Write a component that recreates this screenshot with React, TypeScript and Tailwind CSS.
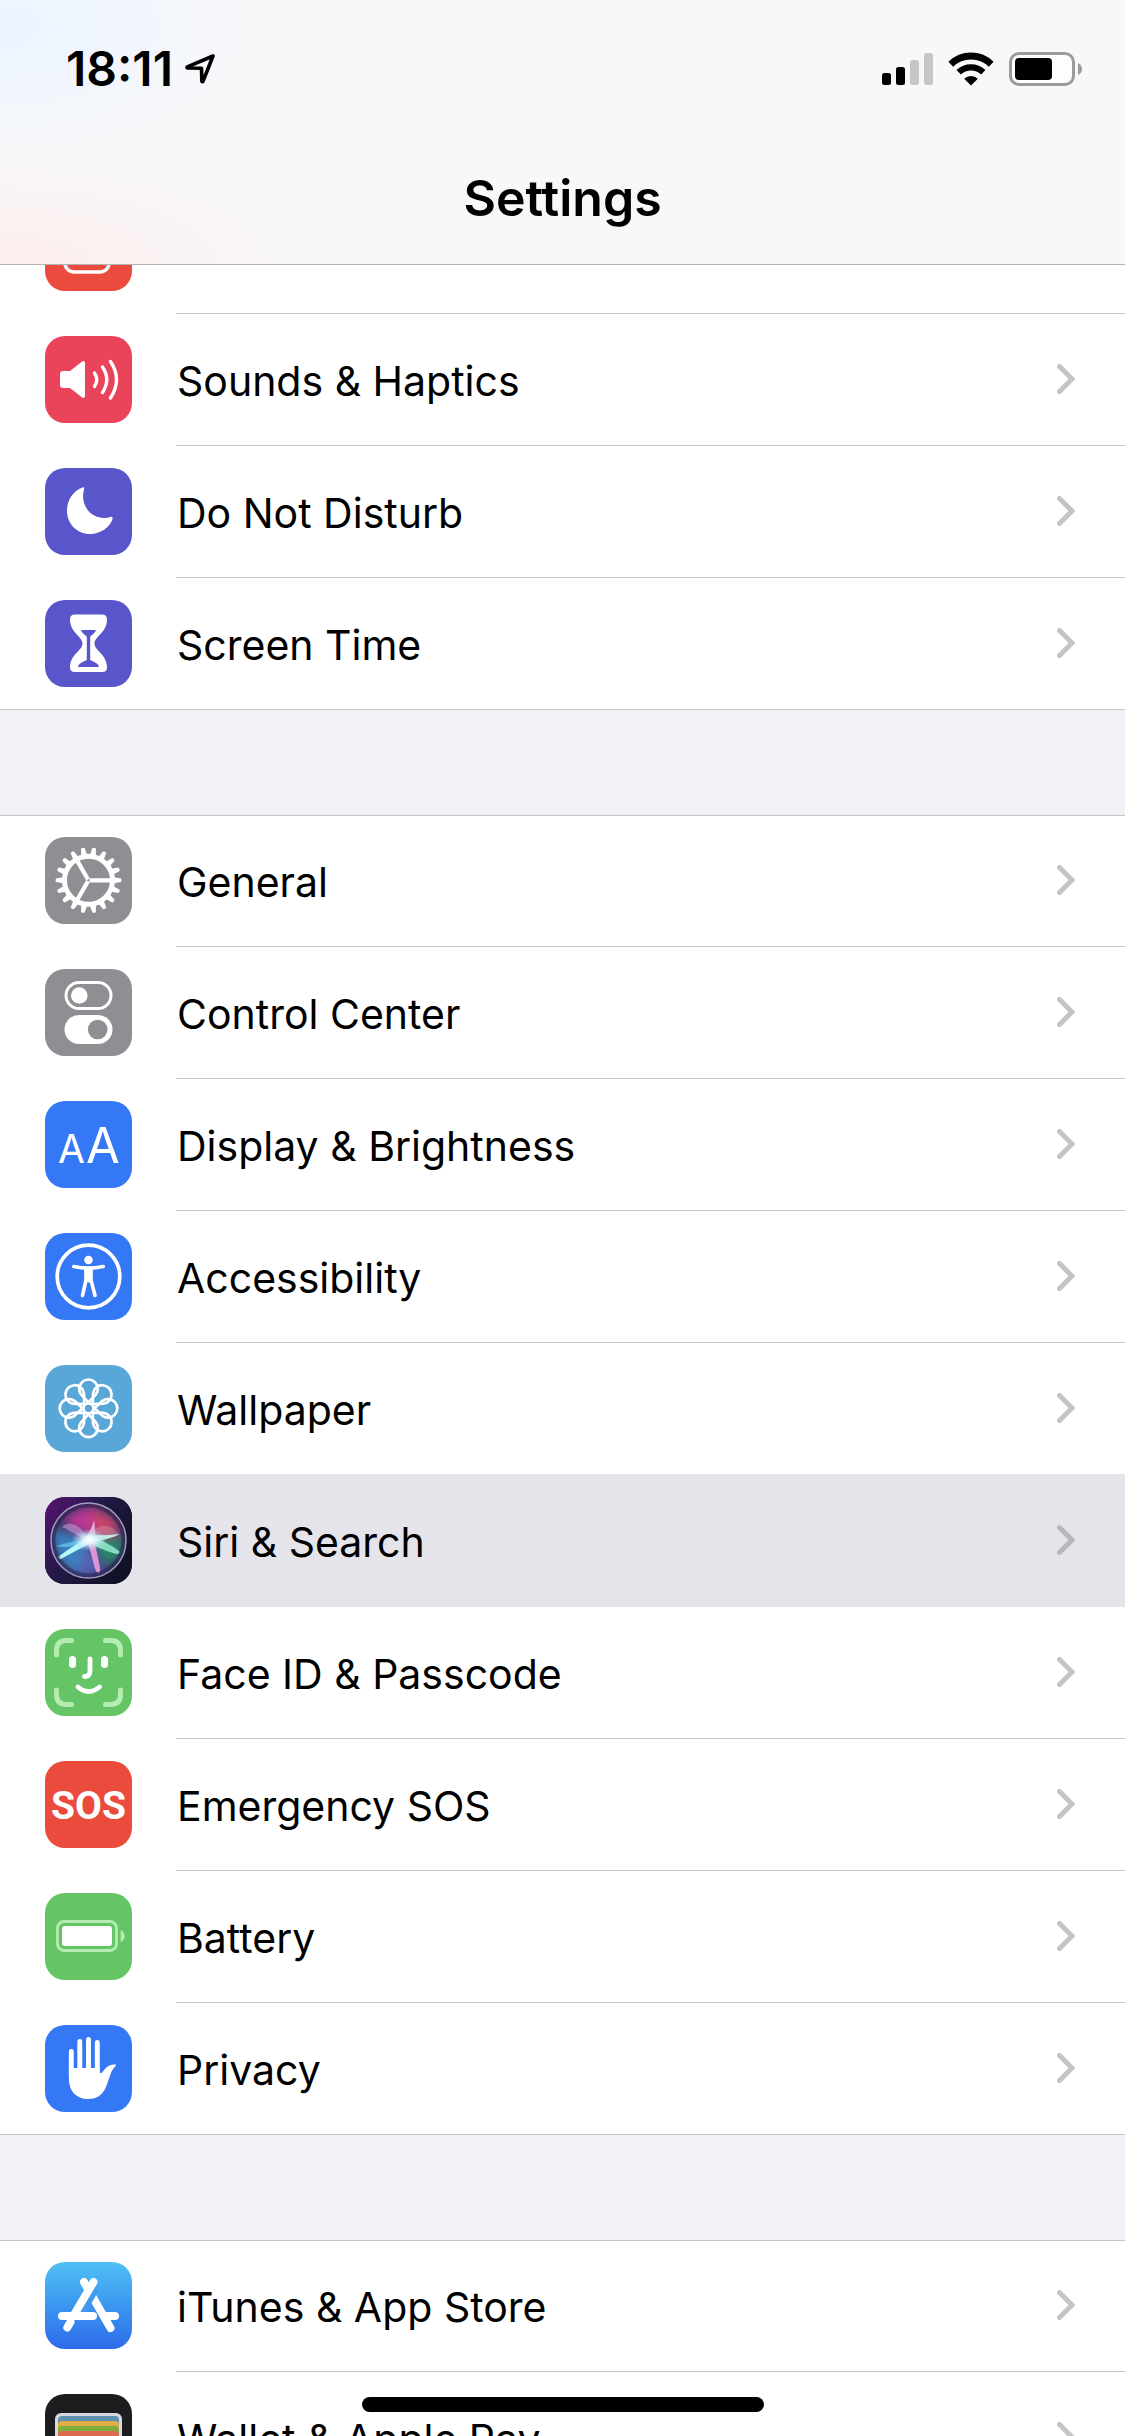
import React from 'react';

interface SettingsItem {
  label: string;
  icon: React.ReactNode;
  selected?: boolean;
}

interface TileProps {
  color: string;
  children: React.ReactNode;
}

const Tile = ({ color, children }: TileProps) => (
  <svg viewBox="0 0 87 87" className={`size-[87px] shrink-0 rounded-[20px] ${color}`} fill="none" aria-hidden="true">
    {children}
  </svg>
);

const NotificationsIcon = () => (
  <Tile color="bg-[#ea4b3d]">
    <rect x="20" y="22" width="44" height="46" rx="9" stroke="#fff" strokeWidth="3.5" />
    <circle cx="62" cy="24" r="10" fill="#fff" />
  </Tile>
);

const SoundsIcon = () => (
  <Tile color="bg-[#e9445a]">
    <path d="M15 38q0-3 3-3h7L36.500 26q3.500-2.500 3.500 1.500v32q0 4-3.500 1.500L25 52h-7q-3 0-3-3z" fill="#fff" />
    <g stroke="#fff" strokeWidth="3.4" strokeLinecap="round">
      <path d="M49.500 37q4.500 6.500 0 13.500" />
      <path d="M57.500 31q8.500 12.500 0 25.500" />
      <path d="M65.500 25.500q12 18 0 36.500" />
    </g>
  </Tile>
);

const MoonIcon = () => (
  <Tile color="bg-[#5856ca]">
    <path
      d="M37.500 19.500C28 23 22 32 22 42.500 22 56 32 66 45 66c11 0 20-7 22.500-15 .5-1.500-.5-2.500-2-2C50 54 34 40 39 21.500c.5-2-.2-2.500-1.500-2z"
      fill="#fff"
    />
  </Tile>
);

const HourglassIcon = () => (
  <Tile color="bg-[#5856ca]">
    <path
      d="M30 14.500h27q5 0 5 5c0 13-12.500 17-12.500 24s12.500 11 12.500 24q0 4.500-5 4.500H30q-5 0-5-4.500c0-13 12.500-17 12.500-24S25 32.500 25 19.500q0-5 5-5z"
      fill="#fff"
    />
    <path
      d="M36.500 30h14c1 0-.5 3-5.300 6.500v23.500c4.300 2 8.300 3.500 8.800 7H33c.5-3.500 4.500-5 8.800-7V36.500c-4.800-3.500-6.300-6.500-5.300-6.500z"
      fill="#5856ca"
    />
  </Tile>
);

const teeth = Array.from({ length: 18 }, (_, i) => i * 20);

const GearIcon = () => (
  <Tile color="bg-[#8e8e93]">
    <g transform="translate(43.500 43.300)">
      {teeth.map((angle) => (
        <path key={angle} d="M24-3.200 32.500-1.800q1 1.800 0 3.600L24 3.200z" fill="#fff" transform={`rotate(${angle})`} />
      ))}
      <circle r="24" stroke="#fff" strokeWidth="5" />
      {[0, 120, 240].map((angle) => (
        <path key={angle} d="M1 0H23" stroke="#fff" strokeWidth="4.200" transform={`rotate(${angle})`} />
      ))}
    </g>
  </Tile>
);

const ControlCenterIcon = () => (
  <Tile color="bg-[#8e8e93]">
    <rect x="21" y="13.500" width="45" height="26" rx="13" stroke="#fff" strokeWidth="3" />
    <circle cx="34.300" cy="26.500" r="8.300" fill="#fff" />
    <rect x="19.500" y="46" width="48" height="29" rx="14.500" fill="#fff" />
    <circle cx="52.700" cy="60.500" r="9.800" fill="#8e8e93" />
  </Tile>
);

const DisplayIcon = () => (
  <Tile color="bg-[#3478f5]">
    <text x="13" y="62" fontSize="39" fill="#fff" className="font-['Inter',sans-serif]">
      A
    </text>
    <text x="41" y="62" fontSize="49" fill="#fff" className="font-['Inter',sans-serif]">
      A
    </text>
  </Tile>
);

const AccessibilityIcon = () => (
  <Tile color="bg-[#3478f5]">
    <circle cx="43.500" cy="43.500" r="31.300" stroke="#fff" strokeWidth="3.700" />
    <circle cx="43.500" cy="27" r="4.300" fill="#fff" />
    <path d="M28.800 33.500q14.700 3.200 29.400 0M41 47l-3.500 15.500M46 47l4 15.500" stroke="#fff" strokeWidth="3.600" strokeLinecap="round" />
    <path d="M39 34.500h9l-.3 14-4.200 1-4.200-1z" fill="#fff" />
  </Tile>
);

const WallpaperIcon = () => (
  <Tile color="bg-[#58a7d8]">
    <g transform="translate(43.500 43.300)" stroke="#fff" strokeWidth="2.700">
      {[0, 45, 90, 135, 180, 225, 270, 315].map((angle) => (
        <path key={angle} d="M0-6-7.500-14A9.300 9.300 0 1 1 7.500-14z" transform={`rotate(${angle})`} />
      ))}
      <circle r="5" />
    </g>
  </Tile>
);

const SiriIcon = () => (
  <Tile color="bg-[#15152b]">
    <defs>
      <linearGradient id="siriBack" x1="0" y1="0" x2="1" y2=".6">
        <stop offset="0" stopColor="#5a1272" />
        <stop offset=".5" stopColor="#221a45" />
        <stop offset="1" stopColor="#101326" />
      </linearGradient>
      <radialGradient id="siriGlow">
        <stop offset="0" stopColor="#fff" />
        <stop offset=".35" stopColor="#e4faff" stopOpacity=".9" />
        <stop offset="1" stopColor="#9fd8ff" stopOpacity="0" />
      </radialGradient>
      <clipPath id="siriBall">
        <circle cx="43.500" cy="43.500" r="37" />
      </clipPath>
      <filter id="siriSoft" x="-50%" y="-50%" width="200%" height="200%">
        <feGaussianBlur stdDeviation="5" />
      </filter>
      <filter id="siriEdge" x="-20%" y="-20%" width="140%" height="140%">
        <feGaussianBlur stdDeviation=".6" />
      </filter>
    </defs>
    <rect width="87" height="87" fill="url(#siriBack)" />
    <g clipPath="url(#siriBall)">
      <circle cx="43.500" cy="43.500" r="37" fill="#3d356b" />
      <g filter="url(#siriSoft)">
        <path d="M18 24q18-18 36-12l-8 30z" fill="#b8388f" />
        <path d="M48 12q24 6 27 24l-26 4z" fill="#c8446a" />
        <path d="M46 44l32-4q0 22-16 28z" fill="#2a8a6c" />
        <path d="M8 32l34 10-8 36Q8 68 8 32z" fill="#3a80c0" />
        <path d="M42 46l18 26q-12 10-28 6z" fill="#5560b4" />
      </g>
      <g filter="url(#siriEdge)">
        <path d="M43 42C34 24 21 25 17 30c7 2 14 10 26 12z" fill="#d0a8e8" opacity=".5" />
        <path d="M43 42c4-14 20-18 30-6 3 5-12 4-30 6z" fill="#e0a5b8" opacity=".35" />
        <path d="M43 42Q28 44 11 49q18 4 32-7z" fill="#6fd8ee" opacity=".6" />
        <path d="M46 39Q30 47 13 60l2 2.500q18-10 34-18z" fill="#b4f8f8" />
        <path d="M37 45q9-10 12-22 2 12 1 24z" fill="#f3b6e2" opacity=".85" />
        <path d="M43 37q19 8 31 17 2 3-3 3-17-5-30-13z" fill="#8ce6c4" opacity=".9" />
        <path d="M43 38q17 1 32-1-12 6-32 9z" fill="#cdf7ee" opacity=".9" />
        <path d="M42 42l7 26q2 8 4.500 8 2.500-1 1-8L49 42z" fill="#ee9ad8" opacity=".9" />
      </g>
      <ellipse cx="44" cy="43" rx="18" ry="11" fill="url(#siriGlow)" />
    </g>
    <circle cx="43.500" cy="43.500" r="35" stroke="#1c1635" strokeWidth="4" opacity=".4" />
    <circle cx="43.500" cy="43.500" r="37.500" stroke="#a79bc4" strokeWidth="1.500" />
  </Tile>
);

const FaceIdIcon = () => (
  <Tile color="bg-[#65c466]">
    <path
      d="M11.500 26v-4.500q0-10 10-10H26.500M60.500 11.500h5q10 0 10 10V26M75.500 61v4.500q0 10-10 10h-5M26.500 75.500h-5q-10 0-10-10V61"
      stroke="#b5ecaf"
      strokeWidth="5"
      strokeLinecap="round"
    />
    <path d="M27.500 30.500v5M59.500 30.500v5" stroke="#fff" strokeWidth="7" strokeLinecap="round" />
    <path d="M45 30v12q0 5.500-5.500 5.500M33 58q10.500 9 21.500 0" stroke="#fff" strokeWidth="4.800" strokeLinecap="round" />
  </Tile>
);

const SosIcon = () => (
  <Tile color="bg-[#ea4b3d]">
    <text
      x="43.500"
      y="58"
      textAnchor="middle"
      fontSize="39"
      fontWeight="700"
      fill="#fff"
      className="font-['Roboto',sans-serif]"
    >
      SOS
    </text>
  </Tile>
);

const BatteryIcon = () => (
  <Tile color="bg-[#65c466]">
    <rect x="12.500" y="28.500" width="59" height="29" rx="6.500" stroke="#b5ecaf" strokeWidth="2.800" />
    <rect x="17" y="33" width="50" height="20" rx="3" fill="#fff" />
    <path d="M75.700 37q4 2 4 6t-4 6z" fill="#b5ecaf" />
  </Tile>
);

const HandIcon = () => (
  <Tile color="bg-[#3478f5]">
    <path d="M26.300 26.500V50M34.800 16.500V50M43.500 14.500V50M52.300 17.500V50" stroke="#fff" strokeWidth="4.900" strokeLinecap="round" />
    <path
      d="M23.900 43h30.800v4.500c1 1 2 .5 3-.8l3-3.700c3-3 7-4 10-3.500 1 .5 0 1.500-1.500 3C65 47 64 56 60 64c-3.500 7-9.500 10-17 10-12 0-19.100-8-19.100-20z"
      fill="#fff"
    />
  </Tile>
);

const AppStoreIcon = () => (
  <Tile color="bg-linear-to-b from-[#51c0f4] to-[#2f6ae9]">
    <g strokeLinecap="round" stroke="#fff" strokeWidth="8">
      <path d="M39 20 65.500 66" />
      <path d="M61 54h9" />
      <path d="M25.500 60l-3.200 5.500" />
    </g>
    <path d="M49 26 31 57" stroke="#4598f0" strokeWidth="11" />
    <path d="M48.500 20 29.500 52M17 54h31" stroke="#fff" strokeWidth="8" strokeLinecap="round" />
  </Tile>
);

const WalletIcon = () => (
  <Tile color="bg-[#1d1d1f]">
    <rect x="10" y="19" width="67" height="52" rx="6" fill="#d8d9e0" />
    <rect x="13" y="22" width="61" height="20" rx="4" fill="#5c8fb0" />
    <rect x="13" y="27" width="61" height="20" rx="4" fill="#dcae45" />
    <rect x="13" y="32" width="61" height="20" rx="4" fill="#7fab3c" />
    <rect x="13" y="37" width="61" height="30" rx="4" fill="#dd6a50" />
  </Tile>
);

const groups: SettingsItem[][] = [
  [
    { label: 'Notifications', icon: <NotificationsIcon /> },
    { label: 'Sounds & Haptics', icon: <SoundsIcon /> },
    { label: 'Do Not Disturb', icon: <MoonIcon /> },
    { label: 'Screen Time', icon: <HourglassIcon /> },
  ],
  [
    { label: 'General', icon: <GearIcon /> },
    { label: 'Control Center', icon: <ControlCenterIcon /> },
    { label: 'Display & Brightness', icon: <DisplayIcon /> },
    { label: 'Accessibility', icon: <AccessibilityIcon /> },
    { label: 'Wallpaper', icon: <WallpaperIcon /> },
    { label: 'Siri & Search', icon: <SiriIcon />, selected: true },
    { label: 'Face ID & Passcode', icon: <FaceIdIcon /> },
    { label: 'Emergency SOS', icon: <SosIcon /> },
    { label: 'Battery', icon: <BatteryIcon /> },
    { label: 'Privacy', icon: <HandIcon /> },
  ],
  [
    { label: 'iTunes & App Store', icon: <AppStoreIcon /> },
    { label: 'Wallet & Apple Pay', icon: <WalletIcon /> },
  ],
];

const Chevron = ({ color }: { color: string }) => (
  <svg viewBox="0 0 18 30" className="h-[30px] w-[18px] shrink-0" fill="none" aria-hidden="true">
    <path d="M2.500 2.500 15 15 2.500 27.500" stroke={color} strokeWidth="5" strokeLinecap="round" />
  </svg>
);

const SettingsRow = ({ item, divider }: { item: SettingsItem; divider: string }) => (
  <a
    href="#"
    className={`flex h-[132px] pl-[45px] ${item.selected ? 'relative bg-[#e5e4ea] shadow-[0_-1px_0_#e5e4ea]' : ''}`}
  >
    <span className="flex items-center pb-px">{item.icon}</span>
    <span className={`ml-11 flex flex-1 items-center justify-between border-b pr-[50px] pb-px pl-px ${divider}`}>
      <span className="pt-1 text-[41px] leading-[48px]">{item.label}</span>
      <Chevron color={item.selected ? '#b8b8bc' : '#c4c4c6'} />
    </span>
  </a>
);

const SettingsGroup = ({ items }: { items: SettingsItem[] }) => (
  <ul className="border-y border-[#c6c6c8] bg-white">
    {items.map((item, i) => {
      const plain = item.selected || i === items.length - 1;
      return (
        <li key={item.label} className="first:-mt-px last:-mb-px">
          <SettingsRow item={item} divider={plain ? 'border-transparent' : 'border-[#c6c6c8]'} />
        </li>
      );
    })}
  </ul>
);

const StatusBar = () => (
  <div className="flex h-[132px] items-center justify-between pt-[6px] pr-[43px] pl-[66px]">
    <div className="flex items-center gap-3">
      <span className="text-[48px] leading-[52px] font-semibold">18:11</span>
      <svg viewBox="0 0 30 30" className="size-[30px]" fill="none" aria-label="Location in use">
        <path d="M28 2 2.300 12.800q-.8 1 .4 1.200L16.500 14.300 16.800 27q.5 1.300 1.300.2z" stroke="#000" strokeWidth="3.600" strokeLinejoin="round" />
      </svg>
    </div>
    <div className="flex items-center gap-[15px]">
      <svg viewBox="0 0 51 34" className="h-[34px] w-[51px]" aria-label="Signal">
        <rect x="0" y="21" width="9" height="12" rx="2.500" />
        <rect x="14" y="15" width="9" height="18" rx="2.500" />
        <rect x="28" y="8" width="9" height="25" rx="2.500" fill="#c6c6c8" />
        <rect x="42" y="1" width="9" height="32" rx="2.500" fill="#c6c6c8" />
      </svg>
      <svg viewBox="0 0 46 34" className="h-[34px] w-[46px]" fill="none" aria-label="Wi-Fi">
        <path d="M2.800 12.200a29 29 0 0 1 40.400 0" stroke="#000" strokeWidth="6.800" />
        <path d="M10.700 20.300a18 18 0 0 1 24.600 0" stroke="#000" strokeWidth="6.300" />
        <path d="M16.200 26.700a10 10 0 0 1 13.600 0L23 33.500z" fill="#000" />
      </svg>
      <svg viewBox="0 0 73 34" className="h-[34px] w-[73px]" fill="none" aria-label="Battery">
        <rect x="1.500" y="1.500" width="63" height="31" rx="8.500" fill="#fdfdfe" stroke="#9b9b9d" strokeWidth="3" />
        <rect x="6" y="6" width="37" height="22" rx="4" fill="#000" />
        <path d="M69 11q4 2 4 6t-4 6z" fill="#9b9b9d" />
      </svg>
    </div>
  </div>
);

const App = () => {
  return (
    <div className="relative h-screen overflow-hidden bg-[#f2f1f7] font-['Inter',sans-serif] text-black">
      <header className="relative z-10 border-b border-[#b2b2b4] bg-[#f8f8fa] bg-[radial-gradient(ellipse_260px_130px_at_0%_10%,#ebf4ff,transparent),radial-gradient(ellipse_340px_120px_at_0%_100%,#fceeec,transparent)]">
        <StatusBar />
        <h1 className="flex h-[132px] items-center justify-center text-[50px] leading-[60px] font-semibold">Settings</h1>
      </header>

      {/* the list is scrolled, its first row sits under the header */}
      <main className="-mt-[83px] flex flex-col gap-[105px]">
        {groups.map((items) => (
          <SettingsGroup key={items[0].label} items={items} />
        ))}
      </main>

      <div className="absolute bottom-6 left-1/2 z-20 h-[15px] w-[402px] -translate-x-1/2 rounded-full bg-black" />
    </div>
  );
};

export default App;
